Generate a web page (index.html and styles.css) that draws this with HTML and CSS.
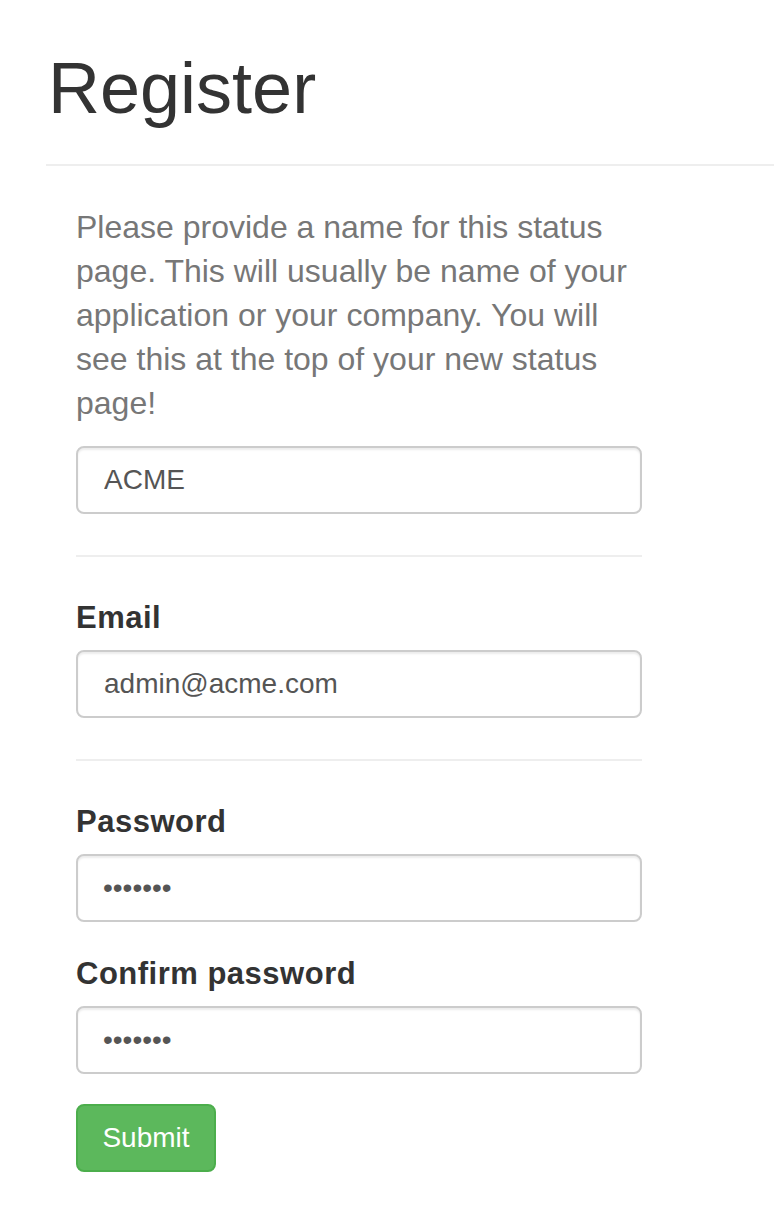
FILE: index.html
```html
<!DOCTYPE html>
<html lang="en">
<head>
<meta charset="utf-8">
<title>Register</title>
<link rel="stylesheet" href="styles.css">
</head>
<body>
<div class="page">
  <h1 class="title">Register</h1>
  <hr class="rule-wide">
  <form class="form" onsubmit="return false;">
    <p class="help">Please provide a name for this status page. This will usually be name of your application or your company. You will see this at the top of your new status page!</p>
    <input class="control" type="text" value="ACME">
    <hr class="rule">
    <div class="group">
      <label class="label" for="email">Email</label>
      <input class="control" id="email" type="text" value="admin@acme.com">
    </div>
    <hr class="rule rule-tight">
    <div class="group group-spaced">
      <label class="label" for="pw">Password</label>
      <input class="control control-pw" id="pw" type="password" value="1234567">
    </div>
    <div class="group group-spaced">
      <label class="label" for="pw2">Confirm password</label>
      <input class="control control-pw" id="pw2" type="password" value="1234567">
    </div>
    <button class="btn-submit" type="submit">Submit</button>
  </form>
</div>
</body>
</html>
```
FILE: styles.css
```css
html, body {
  margin: 0;
  padding: 0;
  background: #fff;
}

body {
  font-family: "Liberation Sans", Arial, Helvetica, sans-serif;
  color: #333;
}

.page {
  padding: 48px 0 0 46px;
}

.title {
  margin: 0 0 0 2px;
  font-size: 72px;
  line-height: 80px;
  font-weight: 400;
  color: #333;
}

.rule-wide {
  margin: 36px 0 0 0;
  border: 0;
  border-top: 2px solid #eee;
  height: 0;
}

.form {
  width: 566px;
  margin-left: 30px;
  padding-top: 39px;
}

.help {
  margin: 0 0 21px 0;
  font-size: 32px;
  line-height: 44px;
  color: #777;
}

.control {
  display: block;
  box-sizing: border-box;
  width: 566px;
  height: 68px;
  margin: 0;
  padding: 0 24px 0 26px;
  border: 2px solid #ccc;
  border-radius: 8px;
  box-shadow: inset 0 2px 2px rgba(0, 0, 0, 0.075);
  font-family: "Liberation Sans", Arial, Helvetica, sans-serif;
  font-size: 28px;
  color: #555;
  background: #fff;
  outline: none;
}

.control-pw {
  padding-left: 25px;
  letter-spacing: 0;
  font-size: 28px;
}

.rule {
  margin: 41px 0 39px 0;
  border: 0;
  border-top: 2px solid #eee;
  height: 0;
}

.group {
  display: flex;
  flex-direction: column;
}

.group-spaced {
  margin-bottom: 30px;
}

.label {
  display: block;
  font-size: 31px;
  line-height: 40px;
  font-weight: 700;
  letter-spacing: 0.5px;
  color: #333;
  margin: 2px 0 12px 0;
}

.btn-submit {
  display: block;
  box-sizing: border-box;
  width: 140px;
  height: 68px;
  margin: 0;
  padding: 0 24px;
  border: 2px solid #4cae4c;
  border-radius: 8px;
  background: #5cb85c;
  color: #fff;
  font-family: "Liberation Sans", Arial, Helvetica, sans-serif;
  font-size: 28px;
  cursor: pointer;
}
```
